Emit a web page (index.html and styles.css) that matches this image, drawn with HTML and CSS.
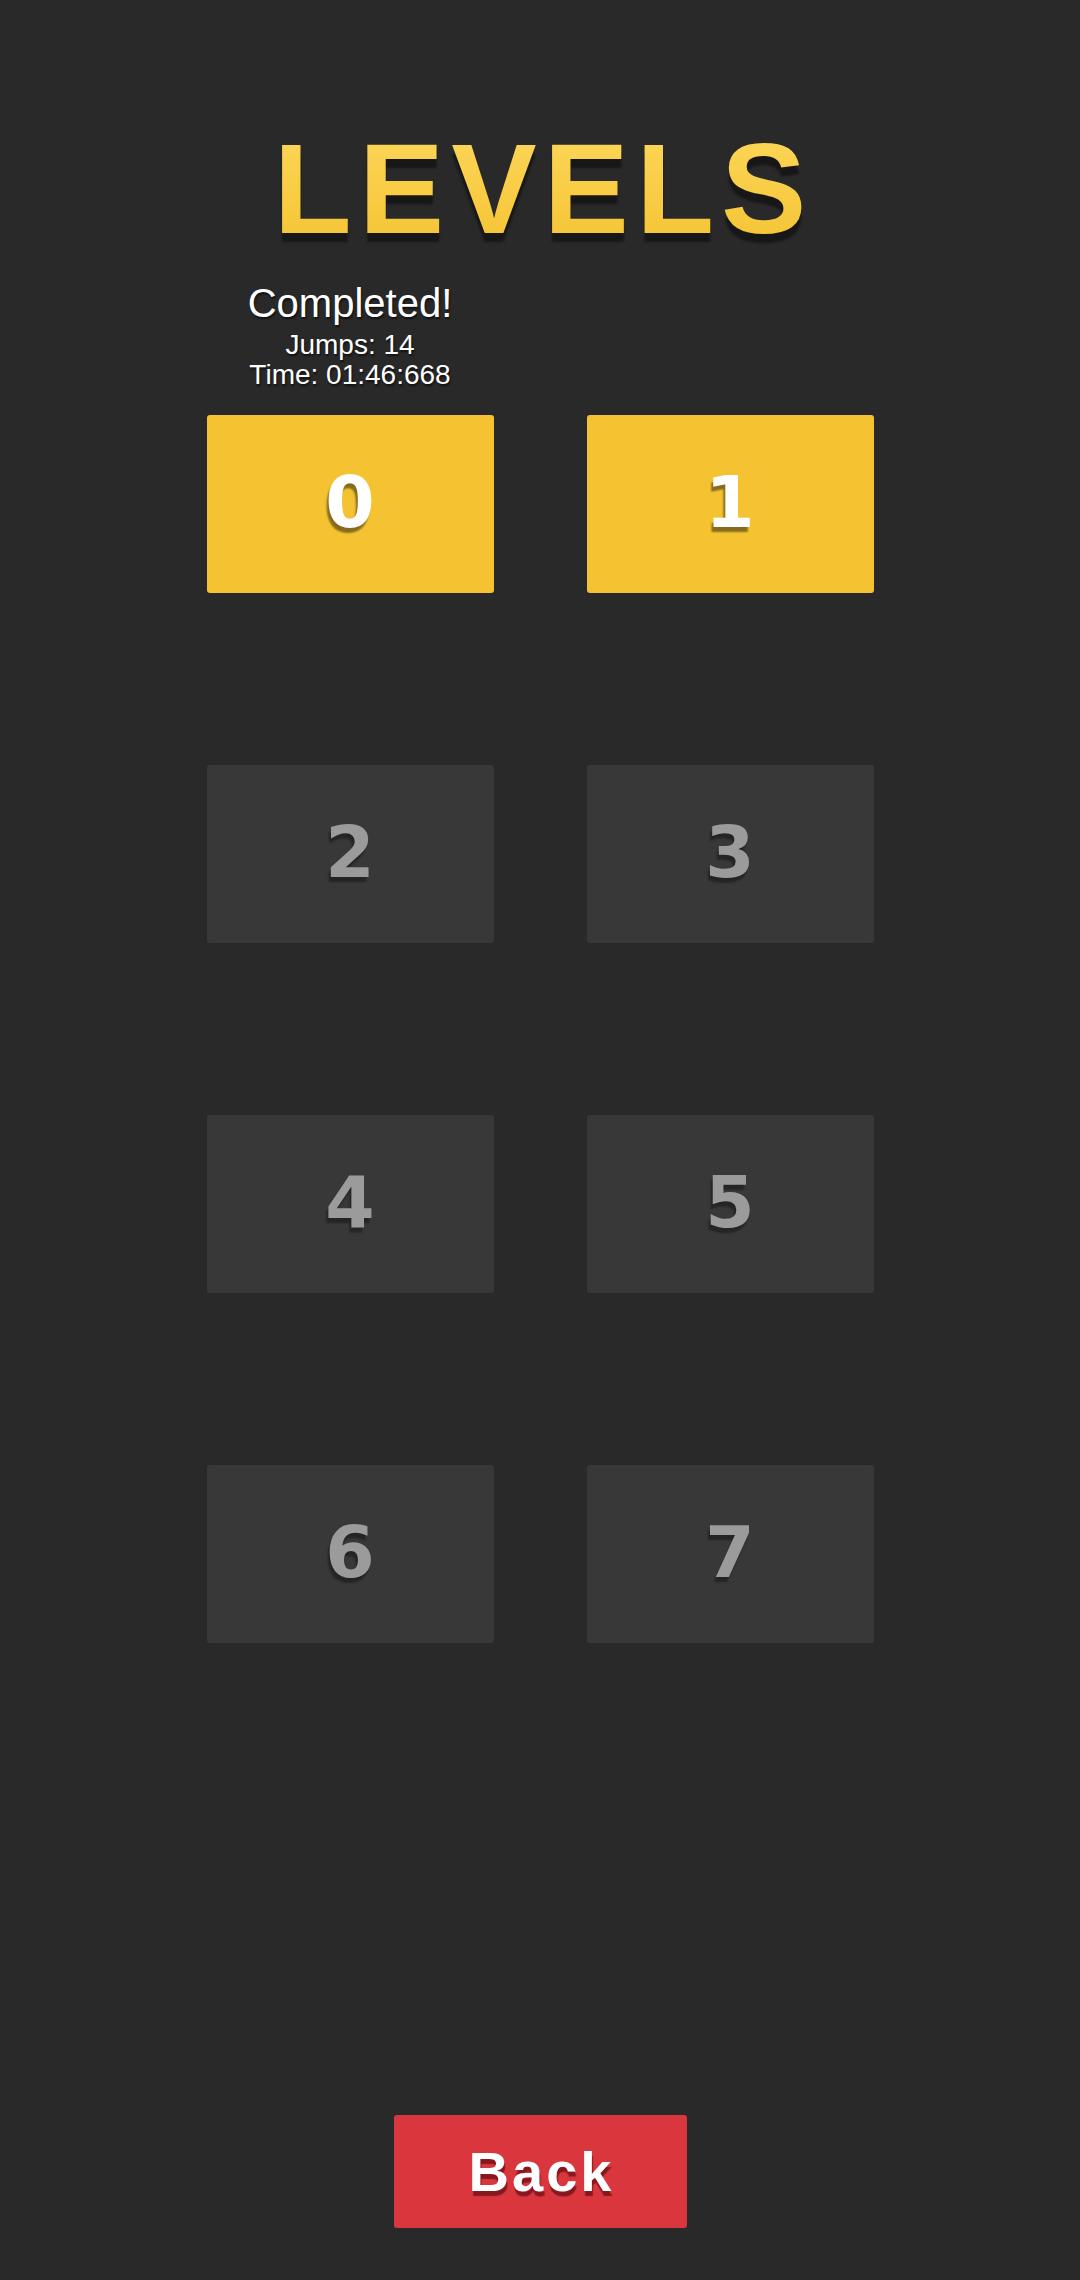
FILE: index.html
```html
<!DOCTYPE html>
<html lang="en">
<head>
<meta charset="utf-8">
<title>Levels</title>
<link rel="stylesheet" href="styles.css">
</head>
<body>
<main class="screen">
  <h1 class="title">LEVELS</h1>
  <section class="board">
    <div class="info">
      <div class="info-head">Completed!</div>
      <div class="info-line">Jumps: 14</div>
      <div class="info-line">Time: 01:46:668</div>
    </div>
    <div class="grid">
      <button class="level open">0</button>
      <button class="level open">1</button>
      <button class="level locked">2</button>
      <button class="level locked">3</button>
      <button class="level locked">4</button>
      <button class="level locked">5</button>
      <button class="level locked">6</button>
      <button class="level locked">7</button>
    </div>
  </section>
  <button class="back">Back</button>
</main>
</body>
</html>
```
FILE: styles.css
```css
html, body {
  margin: 0;
  padding: 0;
  background: #292929;
}
body {
  width: 1080px;
  height: 2280px;
  overflow: hidden;
  font-family: "Liberation Sans", Arial, sans-serif;
}
.screen {
  display: flex;
  flex-direction: column;
  align-items: center;
  height: 2280px;
}
.title {
  margin: 125px 0 0 0;
  padding-left: 7px;
  font-family: "Liberation Sans", Arial, sans-serif;
  font-weight: 700;
  font-size: 128px;
  line-height: 128px;
  height: 128px;
  letter-spacing: 7px;
  background: linear-gradient(#fdd75a, #f4c332);
  -webkit-background-clip: text;
  background-clip: text;
  color: transparent;
  filter: drop-shadow(0 9px 1px #171717);
}
.board {
  width: 667px;
  margin-top: 24px;
}
.info {
  width: 287px;
  text-align: center;
  color: #ffffff;
  text-shadow: 1px 2px 2px rgba(0, 0, 0, 0.6);
}
.info-head {
  font-size: 40px;
  line-height: 53px;
}
.info-line {
  font-size: 28px;
  line-height: 30px;
}
.grid {
  margin-top: 25px;
  display: grid;
  grid-template-columns: 287px 287px;
  grid-auto-rows: 178px;
  column-gap: 93px;
  row-gap: 172px;
}
.level {
  display: flex;
  align-items: center;
  justify-content: center;
  border: 0;
  border-radius: 3px;
  padding: 0 0 4px 0;
  font-family: "DejaVu Sans", "Liberation Sans", sans-serif;
  font-weight: 700;
  font-size: 71px;
  line-height: 71px;
}
.open {
  background: #f5c332;
  color: #ffffff;
  text-shadow: -2px 5px 2px rgba(0, 0, 0, 0.45);
}
.locked {
  background: #383838;
  color: #9b9b9b;
  text-shadow: -2px 5px 2px rgba(0, 0, 0, 0.35);
}
.back {
  margin-top: auto;
  margin-bottom: 52px;
  width: 293px;
  height: 113px;
  border: 0;
  border-radius: 3px;
  padding: 0 0 0 3px;
  background: #d9363e;
  color: #ffffff;
  font-family: "Liberation Sans", Arial, sans-serif;
  font-weight: 700;
  font-size: 56px;
  line-height: 56px;
  letter-spacing: 3px;
  text-shadow: 1px 5px 1px rgba(110, 15, 20, 0.75);
}
```
